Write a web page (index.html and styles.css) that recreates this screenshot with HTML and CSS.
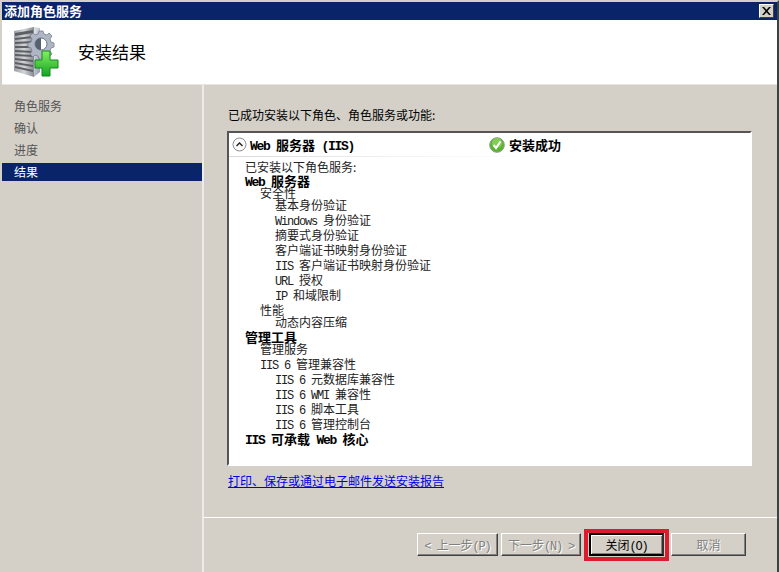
FILE: index.html
```html
<!DOCTYPE html>
<html lang="zh-CN">
<head>
<meta charset="utf-8">
<title>添加角色服务</title>
<link rel="stylesheet" href="styles.css">
</head>
<body>
<div class="window">
  <div class="titlebar">
    <span>添加角色服务</span>
    <span class="close-btn"><svg width="9" height="8" viewBox="0 0 9 8"><path d="M0 0h2l2.500 2.800L7 0h2L5.500 4 9 8H7L4.500 5.200 2 8H0l3.500-4z" fill="#000"/></svg></span>
  </div>
  <header class="header">
    <svg class="header-icon" width="46" height="50" viewBox="0 0 46 50">
      <defs>
        <linearGradient id="front" x1="0" x2="1" y1="0" y2="0"><stop offset="0" stop-color="#9a9da2"/><stop offset=".5" stop-color="#d2d4d8"/><stop offset="1" stop-color="#85888d"/></linearGradient>
        <linearGradient id="side" x1="0" x2="1" y1="0" y2="1"><stop offset="0" stop-color="#e4e8ee"/><stop offset="1" stop-color="#8d99ab"/></linearGradient>
        <linearGradient id="plus" x1="0" x2="0" y1="0" y2="1"><stop offset="0" stop-color="#86ee62"/><stop offset="1" stop-color="#12a520"/></linearGradient>
      </defs>
      <path d="M0 4 20 0v50L0 44z" fill="url(#front)"/>
      <path d="M20 0l6 1v44l-6 5z" fill="url(#side)"/>
      <path d="M1 6l18-3v3L1 9zM1 11l18-2v2L1 13zM1 15l18-1v2L1 17zM1 19h18v2H1zM1 23l18 1v2L1 25zM1 27l18 1v2L1 29zM1 31l18 2v2L1 33zM1 35l18 3v2L1 37zM1 39l18 4v2L1 41z" fill="#5c5f64"/>
      <path d="M25 4h4l1 3 3 1 2-2 3 3-2 3 1 3 3 1v4l-3 1-1 3 2 3-3 3-2-2-3 1-1 3h-4l-1-3-3-1-2 2-3-3 2-3-1-3-3-1v-4l3-1 1-3-2-3 3-3 2 2 3-1z" fill="#aeb6c4" stroke="#77808f" stroke-width=".8"/>
      <circle cx="27" cy="17" r="6" fill="#fff" stroke="#6b7686"/>
      <path d="M27 11a6 6 0 0 0 0 12z" fill="#56616f"/>
      <path d="M28 24h8v9h8v8h-8v8h-8v-8h-7v-8h7z" fill="url(#plus)" stroke="#0d8a1c" stroke-width="1"/>
    </svg>
    <h1 class="header-title">安装结果</h1>
  </header>
  <div class="body">
    <nav class="sidebar">
      <div class="nav-item">角色服务</div>
      <div class="nav-item">确认</div>
      <div class="nav-item">进度</div>
      <div class="nav-item selected">结果</div>
    </nav>
    <main class="main">
      <div class="content">
        <p class="prompt">已成功安装以下角色、角色服务或功能:</p>
        <section class="listbox">
          <div class="list-head">
            <svg class="collapse" width="15" height="15" viewBox="0 0 15 15"><circle cx="7.500" cy="7.500" r="6.500" fill="#fafafa" stroke="#8f8f8f"/><path d="M4.500 9l3-3 3 3" fill="none" stroke="#222" stroke-width="1.400"/></svg>
            <span class="head-name"><span class="lat">Web </span>服务器<span class="lat"> (IIS)</span></span>
            <span class="head-status">
              <svg class="status-icon" width="16" height="16" viewBox="0 0 16 16"><circle cx="8" cy="8" r="7.300" fill="#5cb531" stroke="#8d9a86"/><circle cx="8" cy="6" r="5" fill="#9ade6f" opacity=".6"/><path d="M4.500 8l2.500 3 4.500-6.500" fill="none" stroke="#fff" stroke-width="2"/></svg>
              安装成功
            </span>
          </div>
          <div class="tree">
            <div class="row first l0 plain">已安装以下角色服务:</div>
            <div class="row tight l0 strong"><span class="lat">Web </span>服务器</div>
            <div class="row tight l1">安全性</div>
            <div class="row l2">基本身份验证</div>
            <div class="row l2"><span class="lat">Windows </span>身份验证</div>
            <div class="row l2">摘要式身份验证</div>
            <div class="row l2">客户端证书映射身份验证</div>
            <div class="row l2"><span class="lat">IIS </span>客户端证书映射身份验证</div>
            <div class="row l2"><span class="lat">URL </span>授权</div>
            <div class="row l2"><span class="lat">IP </span>和域限制</div>
            <div class="row tight l1">性能</div>
            <div class="row l2">动态内容压缩</div>
            <div class="row tight l0 strong">管理工具</div>
            <div class="row l1">管理服务</div>
            <div class="row l1"><span class="lat">IIS 6 </span>管理兼容性</div>
            <div class="row l2"><span class="lat">IIS 6 </span>元数据库兼容性</div>
            <div class="row l2"><span class="lat">IIS 6 WMI </span>兼容性</div>
            <div class="row l2"><span class="lat">IIS 6 </span>脚本工具</div>
            <div class="row l2"><span class="lat">IIS 6 </span>管理控制台</div>
            <div class="row l0 strong"><span class="lat">IIS </span>可承载<span class="lat"> Web </span>核心</div>
          </div>
        </section>
        <a class="report-link" href="#">打印、保存或通过电子邮件发送安装报告</a>
      </div>
      <footer class="footer">
        <button class="btn wide" disabled><span class="lat">&lt; </span>上一步<span class="lat">(P)</span></button>
        <button class="btn wide next" disabled>下一步<span class="lat">(N) &gt;</span></button>
        <span class="close-wrap">
          <button class="btn primary">关闭<span class="lat">(O)</span></button>
          <span class="annotation"></span>
        </span>
        <button class="btn" disabled>取消</button>
      </footer>
    </main>
  </div>
</div>
</body>
</html>
```
FILE: styles.css
```css
* { box-sizing: border-box; }
html, body { margin: 0; padding: 0; height: 100%; overflow: hidden; }
body {
  font-family: "Noto Sans CJK SC", "Liberation Sans", sans-serif;
  font-size: 12px;
  color: #000;
  background: #d4d0c8;
}
.lat { font-family: "Liberation Mono", monospace; font-size: 12px; letter-spacing: -1.2px; white-space: pre; }
.window {
  width: 779px;
  height: 572px;
  display: flex;
  flex-direction: column;
  border-top: 2px solid #d4d0c8;
  border-left: 2px solid #d4d0c8;
  border-right: 2px solid #404040;
}
.titlebar {
  height: 18px;
  flex: none;
  background: #0a246a;
  color: #fff;
  font-size: 13px;
  font-weight: 700;
  line-height: 18px;
  padding: 0 3px 0 2px;
  display: flex;
  justify-content: space-between;
  align-items: center;
}
.close-btn {
  width: 15px;
  height: 14px;
  background: #d4d0c8;
  border: 1px solid;
  border-color: #fff #404040 #404040 #fff;
  display: flex;
  align-items: center;
  justify-content: center;
}
.header {
  height: 65px;
  flex: none;
  background: #fff;
  display: flex;
  align-items: center;
  gap: 18px;
  padding-left: 12px;
  border-bottom: 1px solid #e8e6e0;
}
.header-icon { flex: none; }
.header-title { margin: 0; font-size: 17px; font-weight: 400; line-height: 24px; }
.body { flex: 1; display: flex; min-height: 0; }
.sidebar {
  width: 202px;
  flex: none;
  padding-top: 12px;
  border-right: 2px solid #eeece8;
  color: #555;
}
.nav-item { height: 18px; line-height: 18px; padding-left: 12px; margin-bottom: 4px; }
.nav-item.selected { background: #0a246a; color: #fff; }
.main { flex: 1; display: flex; flex-direction: column; min-width: 0; }
.content { height: 432px; flex: none; padding: 21px 25px 0 23px; }
.prompt { margin: 0 0 7px; height: 18px; line-height: 18px; padding-left: 1px; }
.listbox {
  height: 335px;
  background: #fff;
  border: 2px solid;
  border-color: #555 #fff #fff #555;
}
.list-head {
  height: 24px;
  display: flex;
  align-items: center;
  padding: 0 0 1px 3px;
  font-weight: 700;
  font-size: 13px;
  border-bottom: 1px solid;
  border-image: linear-gradient(to right, #d8d8d8, #f4f4f4 35%, #fff 60%) 1;
}
.head-name { margin-left: 3px; width: 239px; }
.head-name .lat, .strong .lat { font-size: 13px; letter-spacing: -1.3px; font-weight: 700; }
.head-status { display: flex; align-items: center; gap: 4px; }
.status-icon { margin-top: 1px; }
.tree { padding-top: 2px; }
.row { height: 15px; line-height: 15px; white-space: nowrap; color: #222; }
.row.tight { height: 12px; }
.row.first { height: 14px; }
.l0 { padding-left: 16px; }
.l1 { padding-left: 31px; }
.l2 { padding-left: 46px; }
.strong { font-size: 13px; font-weight: 700; color: #000; }
.report-link {
  display: block;
  margin-top: 6px;
  padding-left: 1px;
  height: 18px;
  line-height: 18px;
  color: #0000e0;
  text-decoration: underline;
}
.footer {
  flex: 1;
  border-top: 1px solid #fff;
  padding: 15px 31px 0 0;
  display: flex;
  justify-content: flex-end;
  align-items: flex-start;
}
.btn {
  width: 75px;
  height: 23px;
  padding: 0;
  background: #d4d0c8;
  font: inherit;
  color: #000;
  border: 1px solid;
  border-color: #fff #404040 #404040 #fff;
  box-shadow: inset -1px -1px 0 #808080;
}
.btn.wide { width: 81px; }
.btn.next { margin-left: 3px; width: 80px; margin-right: 8px; }
.btn:disabled { color: #808080; text-shadow: 1px 1px 0 #fff; }
.btn.primary { display: block; border: 2px solid #000; border-right-color: #303030; box-shadow: inset 1px 1px 0 #fff, inset -1px -1px 0 #808080; }
.close-wrap { position: relative; margin-right: 7px; }
.annotation {
  position: absolute;
  left: -5px;
  top: -4px;
  width: 85px;
  height: 32px;
  border: 4px solid #dc1c2e;
}
```
